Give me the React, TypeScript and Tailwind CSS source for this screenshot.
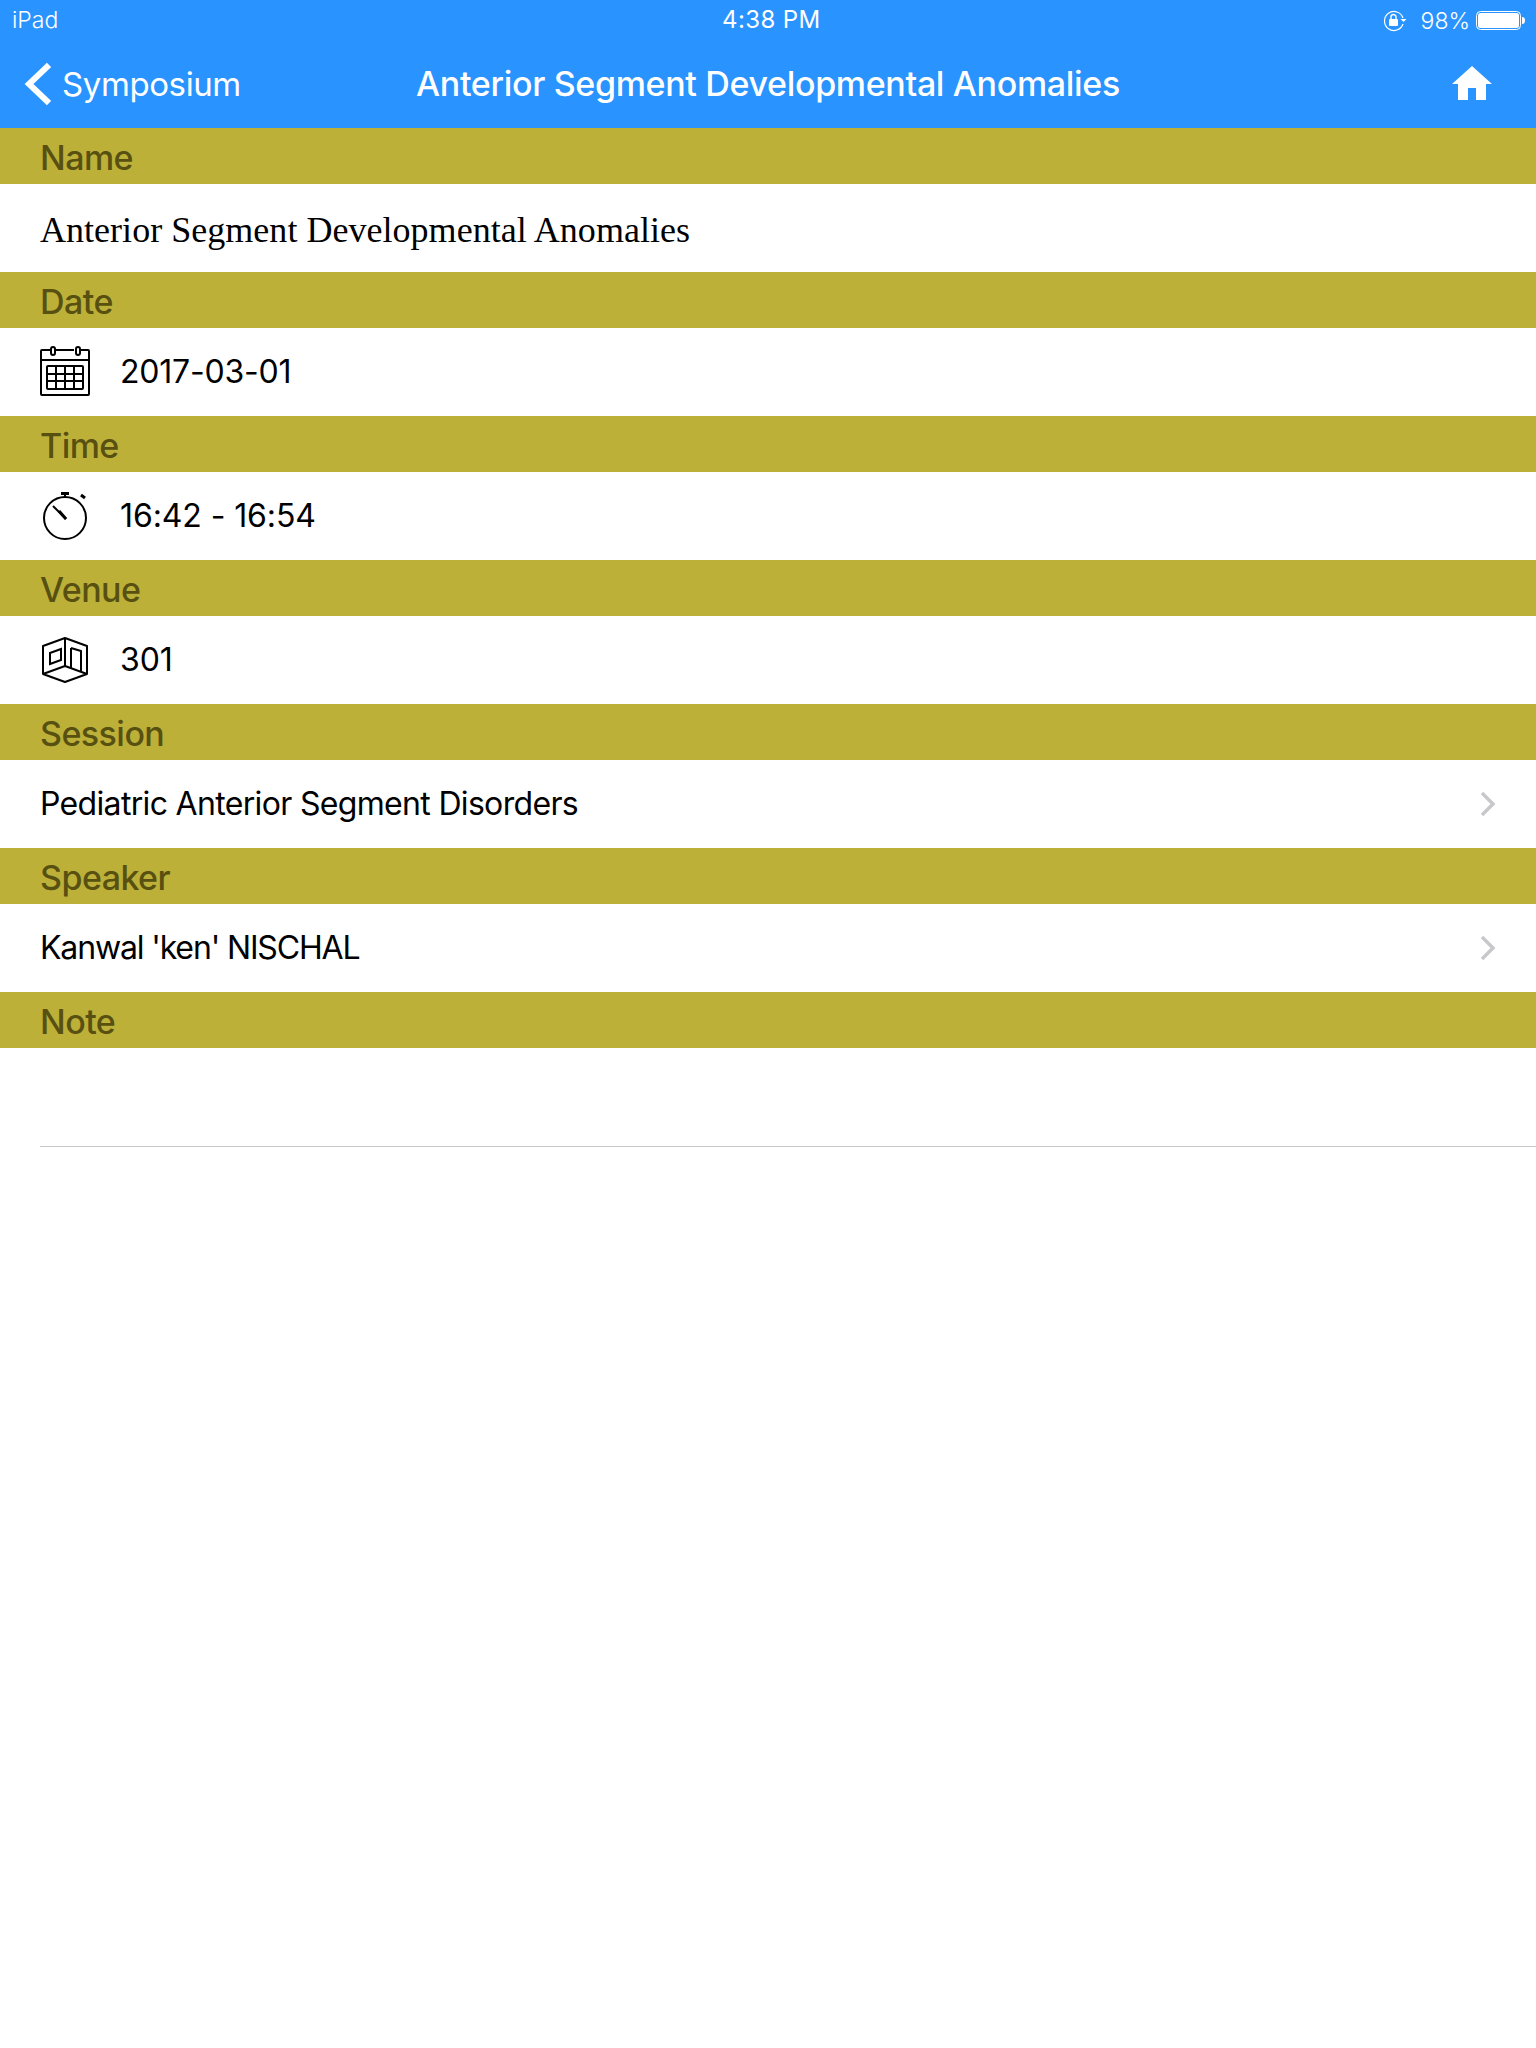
import React from 'react';

const sans = "font-['Inter','Liberation_Sans',sans-serif]";

function SectionHeader({ title }: { title: string }) {
  return (
    <div className="h-14 bg-[#bdb039] pl-10 pt-[3px] flex items-center">
      <span className="text-[34px] font-medium leading-none text-[#575011] tracking-[-0.55px]">{title}</span>
    </div>
  );
}

function Row({ icon, text, chevron, tracking = 'tracking-[-0.1px]' }: { icon?: React.ReactNode; text: string; chevron?: boolean; tracking?: string }) {
  return (
    <div className="h-[88px] bg-white pl-10 flex items-center text-black">
      {icon && <div className="w-[80px] shrink-0 flex items-center">{icon}</div>}
      <span className={`text-[32px] leading-none ${tracking}`}>{text}</span>
      {chevron && (
        <svg className="ml-auto mr-10" width="16" height="26" viewBox="0 0 16 26" fill="none">
          <path d="M2 2l11 11L2 24" stroke="#c7c7cc" strokeWidth="3.4" />
        </svg>
      )}
    </div>
  );
}

// calendar with rings and date grid
const CalendarIcon = () => (
  <svg className="mb-[2px]" width="50" height="50" viewBox="0 0 50 50" fill="none" stroke="#000" strokeWidth="2">
    <path d="M11 4H2a1 1 0 0 0-1 1v43a1 1 0 0 0 1 1h46a1 1 0 0 0 1-1V5a1 1 0 0 0-1-1h-9M16 4h18M1 14h48" />
    <rect x="11" y="1" width="4" height="8" rx="2" />
    <rect x="36" y="1" width="4" height="8" rx="2" />
    <rect x="7" y="20" width="36" height="23" rx="1" />
    <path d="M16 20v23M25 20v23M34 20v23M7 28h36M7 35h36" />
  </svg>
);

const StopwatchIcon = () => (
  <svg className="ml-[2px] mb-[3px]" width="46" height="50" viewBox="0 0 46 50" fill="none" stroke="#000">
    <circle cx="23" cy="28" r="21" strokeWidth="2" />
    <path d="M19 2h8v3h-3v2h-2V5h-3z" fill="#000" stroke="none" />
    <path d="M39 5l4 3" strokeWidth="3" />
    <path d="M11 16l13 13" strokeWidth="2" />
    <path d="M17 21l7 8" strokeWidth="3" />
  </svg>
);

// open room corner
const VenueIcon = () => (
  <svg className="ml-[2px]" width="46" height="46" viewBox="0 0 46 46" fill="none" stroke="#000" strokeWidth="2">
    <path d="M23 1L1 9v28l22 8 22-8V9zM23 1v28M1 37l22-8 22 8" strokeLinejoin="round" />
    <path d="M8 16l11-4v11L8 27zM29 11l10 3v21M29 11v21" />
  </svg>
);

export default function App() {
  return (
    <div className={`min-h-[2048px] bg-white ${sans}`}>
      <div className="bg-[#2993ff] text-white h-[128px]">
        <div className="h-10 px-3 flex items-center justify-between relative text-[23px] font-light">
          <span>iPad</span>
          <span className="absolute left-[722px] top-[6px] text-[24px] leading-[28px] font-normal tracking-[0.4px]">4:38 PM</span>
          <div className="flex items-center mr-[-2px] mt-[2px]">
            <svg width="24" height="22" viewBox="0 0 24 22" fill="none" stroke="#fff" strokeWidth="1.2" className="mr-[14px]">
              <path d="M20 8A9.5 9.5 0 1 0 20 14" />
              <path d="M17.5 9h6l-3 3z" fill="#fff" stroke="none" />
              <rect x="6" y="9" width="9" height="7" rx="1" fill="#fff" stroke="none" />
              <path d="M8 9V7a2.5 2.5 0 0 1 5 0v2" strokeWidth="1.4" />
            </svg>
            <span>98%</span>
            <svg width="50" height="20" viewBox="0 0 50 20" className="ml-[6px]">
              <rect x="0.5" y="0.5" width="44" height="18" rx="4" fill="none" stroke="#fff" />
              <rect x="2" y="2" width="41" height="15" rx="2.5" fill="#fff" />
              <path d="M46 6c2 0 3 1 3 3.500s-1 3.500-3 3.500z" fill="#fff" />
            </svg>
          </div>
        </div>
        <div className="h-[88px] flex items-center relative">
          <svg width="28" height="44" viewBox="0 0 28 44" fill="none" className="ml-[23px] mb-[1px]">
            <path d="M26 3L6 22l20 19" stroke="#fff" strokeWidth="6" />
          </svg>
          <span className="ml-[11px] text-[33px] leading-none tracking-[-0.4px]">Symposium</span>
          <span className="absolute left-[416px] text-[34px] leading-none font-medium tracking-[-0.33px]">
            Anterior Segment Developmental Anomalies
          </span>
          <svg width="40" height="34" viewBox="0 0 40 34" className="ml-auto mr-[44px] mb-[3px]" fill="#fff">
            <path d="M20 0l20 18h-6v16H24V22h-8v12H6V18H0z" />
          </svg>
        </div>
      </div>

      <SectionHeader title="Name" />
      <div className="h-[88px] bg-white pl-10 pt-[4px] flex items-center">
        <span className="font-['Liberation_Serif',serif] text-[36px] leading-none text-black tracking-[0.03px]">
          Anterior Segment Developmental Anomalies
        </span>
      </div>
      <SectionHeader title="Date" />
      <Row icon={<CalendarIcon />} text="2017-03-01" tracking="tracking-[-0.2px]" />
      <SectionHeader title="Time" />
      <Row icon={<StopwatchIcon />} text="16:42 - 16:54" />
      <SectionHeader title="Venue" />
      <Row icon={<VenueIcon />} text="301" />
      <SectionHeader title="Session" />
      <Row text="Pediatric Anterior Segment Disorders" chevron tracking="tracking-[-0.67px]" />
      <SectionHeader title="Speaker" />
      <Row text="Kanwal 'ken' NISCHAL" chevron tracking="tracking-[-1.15px]" />
      <SectionHeader title="Note" />
      <div className="h-[99px] pl-10">
        <div className="h-full border-b border-[#c8c8cc]" />
      </div>
    </div>
  );
}
